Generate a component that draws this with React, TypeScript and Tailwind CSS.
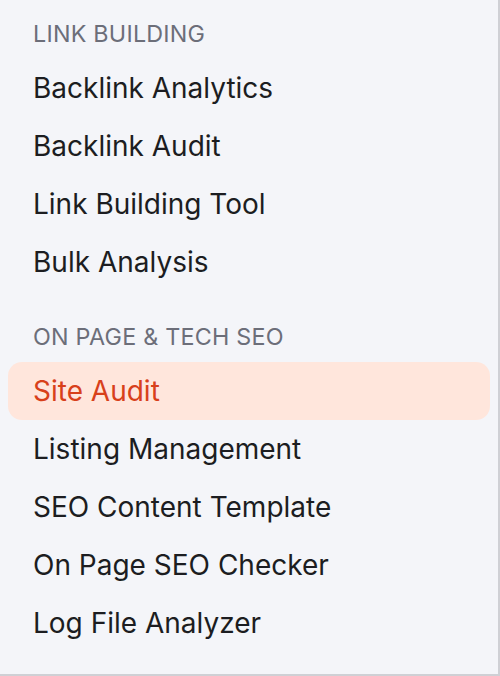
import React from 'react'

const sections = [
  {
    title: 'LINK BUILDING',
    items: ['Backlink Analytics', 'Backlink Audit', 'Link Building Tool', 'Bulk Analysis'],
  },
  {
    title: 'ON PAGE & TECH SEO',
    items: ['Site Audit', 'Listing Management', 'SEO Content Template', 'On Page SEO Checker', 'Log File Analyzer'],
  },
]

const active = 'Site Audit'

export default function App() {
  return (
    <div
      className="w-[500px] h-[676px] bg-[#f4f5f9] border-r-2 border-b-2 border-[#cfd0d5] overflow-hidden"
      style={{ fontFamily: 'Inter, "Noto Sans", sans-serif' }}
    >
      <nav className="flex flex-col pl-2 pr-2">
        {sections.map((section, i) => (
          <div key={section.title} className={i > 0 ? 'mt-[21px]' : 'mt-[9px]'}>
            <div className="h-[50px] flex items-center pl-[25px] text-[23.3px] text-[#6c6e79] tracking-[0.01em]">
              {section.title}
            </div>
            <ul className="flex flex-col">
              {section.items.map((item) => (
                <li
                  key={item}
                  className={`h-[58px] flex items-center pl-[25px] rounded-[14px] text-[28px] ${
                    item === active ? 'bg-[#ffe6dc] text-[#d8401a]' : 'text-[#1c1d21]'
                  }`}
                >
                  {item}
                </li>
              ))}
            </ul>
          </div>
        ))}
      </nav>
    </div>
  )
}
